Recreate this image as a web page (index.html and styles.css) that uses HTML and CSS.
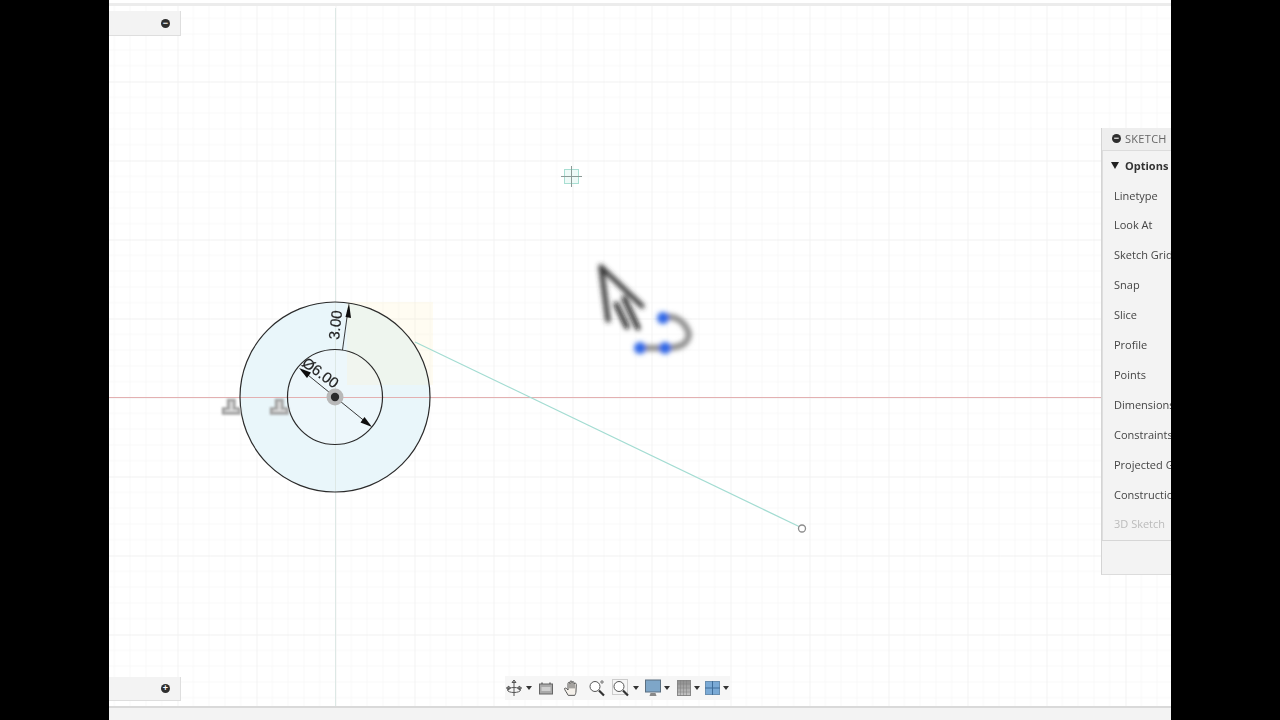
FILE: index.html
```html
<!DOCTYPE html>
<html lang="en">
<head>
    <meta charset="UTF-8">
    <title>Sketch</title>
    <link rel="stylesheet" href="styles.css">
</head>
<body>
<div class="app">
    <div class="top-strip"></div>

    <div class="canvas">
        <!-- sketch drawing, the viewBox keeps screen coordinates (canvas origin is 109,6) -->
        <svg class="drawing" width="1062" height="700" viewBox="109 6 1062 700">
            <defs>
                <pattern id="grid" x="335.5" y="397.5" width="79" height="79" patternUnits="userSpaceOnUse">
                    <path d="M15.8 0V79M31.6 0V79M47.4 0V79M63.2 0V79M0 15.8H79M0 31.6H79M0 47.4H79M0 63.2H79" fill="none" stroke="#f8f8f8" stroke-width="1"/>
                    <path d="M0 0V79M0 0H79" fill="none" stroke="#eeeeee" stroke-width="1.4"/>
                </pattern>
                <filter id="soft"><feGaussianBlur stdDeviation="0.45"/></filter>
                <filter id="blurry" x="-20%" y="-20%" width="140%" height="140%"><feGaussianBlur stdDeviation="0.8"/></filter>
                <filter id="smear" filterUnits="userSpaceOnUse" x="580" y="250" width="130" height="120"><feGaussianBlur stdDeviation="2.6"/></filter>
            </defs>
            <rect x="109" y="6" width="1062" height="700" fill="url(#grid)"/>

            <circle cx="335" cy="397" r="95" fill="#e9f6fa"/>
            <circle cx="335" cy="397" r="47.5" fill="#edf7fb"/>
            <rect x="347" y="302" width="86" height="83" fill="#fff0c4" fill-opacity="0.22"/>

            <line x1="335.5" y1="8" x2="335.5" y2="706" stroke="#dde8e5"/>
            <line x1="109" y1="397.5" x2="1102" y2="397.5" stroke="#e3b0b1"/>
            <line x1="415" y1="342" x2="799" y2="526.5" stroke="#a3dcd2" stroke-width="1.2"/>
            <circle cx="802" cy="528.5" r="3.5" fill="#fff" stroke="#8c8c8c" stroke-width="1.3"/>

            <g filter="url(#soft)">
                <circle cx="335" cy="397" r="95" fill="none" stroke="#2b2b2b" stroke-width="1.2"/>
                <circle cx="335" cy="397" r="47.5" fill="none" stroke="#2b2b2b" stroke-width="1.2"/>

                <line x1="342.5" y1="350" x2="348" y2="310" stroke="#222" stroke-width="0.9"/>
                <path d="M349 303L351 318L345.5 317Z" fill="#111"/>
                <line x1="303" y1="371" x2="367" y2="423" stroke="#222" stroke-width="0.9"/>
                <path d="M299 368L311 372.5L307 378Z" fill="#111"/>
                <path d="M372 427L360.5 422.5L364.5 417Z" fill="#111"/>

                <text class="dim" transform="translate(339 340) rotate(-84)">3.00</text>
                <text class="dim" transform="translate(301 365) rotate(36)">Ø6.00</text>
            </g>

            <circle cx="335" cy="397" r="8.5" fill="#b8b8b8" filter="url(#soft)"/>
            <circle cx="335" cy="397" r="4.2" fill="#2a2a2a"/>

            <g class="constraint" filter="url(#blurry)">
                <path d="M223 413.5H239.5V408.5H234.5V400H228V408.5H223Z"/>
                <path d="M271 413.5H287.5V408.5H282.5V400H276V408.5H271Z"/>
                <path class="constraint-inner" d="M226 410.5H237M231.5 402V410.5M274 410.5H285M279.5 402V410.5"/>
            </g>

            <!-- origin point marker -->
            <g fill="none" stroke-width="1" filter="url(#soft)">
                <rect x="564.5" y="169.5" width="14" height="14" fill="#eefaf7" stroke="#a8ded2"/>
                <path d="M561 176.5H582M571.5 166V187" stroke="#8b9a96"/>
            </g>

            <!-- smeared cursor from the video capture -->
            <g filter="url(#smear)" fill="none" stroke-linecap="round" stroke-linejoin="round">
                <path d="M601 267L608 320M601 267L642 306" stroke="#333" stroke-width="5"/>
                <path d="M616 304L627 327M624 298L638 328" stroke="#111" stroke-width="4.5"/>
                <path d="M664 317C678 315 686 324 689 334C688 342 684 348 664 348H640" stroke="#888" stroke-width="6"/>
                <circle cx="663" cy="318" r="6" fill="#2f66e6"/>
                <circle cx="640" cy="348" r="6" fill="#2f66e6"/>
                <circle cx="665" cy="348" r="6" fill="#2f66e6"/>
            </g>
        </svg>

        <div class="side-tab side-tab-top"><span class="round-btn">&minus;</span></div>
        <div class="side-tab side-tab-bottom"><span class="round-btn">+</span></div>

        <div class="palette">
            <div class="palette-head"><span class="round-btn">&minus;</span>SKETCH PALETTE</div>
            <div class="palette-body">
                <div class="palette-title"><span class="caret"></span>Options</div>
                <div class="palette-row">Linetype</div>
                <div class="palette-row">Look At</div>
                <div class="palette-row">Sketch Grid</div>
                <div class="palette-row">Snap</div>
                <div class="palette-row">Slice</div>
                <div class="palette-row">Profile</div>
                <div class="palette-row">Points</div>
                <div class="palette-row">Dimensions</div>
                <div class="palette-row">Constraints</div>
                <div class="palette-row">Projected Geometries</div>
                <div class="palette-row">Construction</div>
                <div class="palette-row disabled">3D Sketch</div>
            </div>
            <div class="palette-foot"></div>
        </div>

        <div class="toolbar">
            <svg class="tool" width="18" height="18" viewBox="0 0 18 18" fill="none" stroke="#555" stroke-width="1">
                <path d="M9 1V17M9 1L7 3.5H11ZM1.5 9H6M12 9H16.5M1.5 9L4 7V11ZM16.5 9L14 7V11Z"/>
                <ellipse cx="9" cy="11" rx="6.5" ry="2.5"/>
            </svg>
            <span class="caret small"></span>
            <svg class="tool gap" width="16" height="16" viewBox="0 0 16 16">
                <rect x="1.5" y="4" width="13" height="10" fill="#a9a9a9" stroke="#666"/>
                <rect x="3.5" y="7" width="9" height="4" fill="#cfcfcf"/>
                <path d="M4 4V2.5M12 4V2.5" stroke="#666" stroke-width="1.5"/>
            </svg>
            <svg class="tool gap-9" width="18" height="18" viewBox="0 0 18 18" fill="#f4f0ea" stroke="#555" stroke-width="1" stroke-linecap="round" stroke-linejoin="round">
                <path d="M5 16C3.5 13 1.5 11 1.5 9.5C2.5 8.5 4 9.5 5 11V4.5C5 3 6.8 3 7 4.5V3C7 1.5 9 1.5 9 3V3.5C9.3 2 11 2.3 11 3.8V5C11.5 3.7 13.5 4 13.3 5.5L13 12C13 14 12.5 15 12 16Z"/>
                <path d="M7 4.5V9M9 3.5V9M11 5V9" fill="none"/>
            </svg>
            <svg class="tool gap-7" width="18" height="18" viewBox="0 0 18 18" fill="none" stroke="#555">
                <circle cx="7" cy="7.5" r="5" fill="#fff"/>
                <path d="M11 11.5L16 16.5" stroke="#333" stroke-width="2.2"/>
                <path d="M14 1V5M12 3H16" stroke="#777"/>
            </svg>
            <svg class="tool gap" width="18" height="18" viewBox="0 0 18 18" fill="none" stroke="#555">
                <rect x="0.5" y="0.5" width="15" height="15" stroke="#ccc"/>
                <circle cx="7" cy="7.5" r="5" fill="#fff"/>
                <path d="M11 11.5L16 16.5" stroke="#333" stroke-width="2.2"/>
            </svg>
            <span class="caret small"></span>
            <svg class="tool gap" width="16" height="18" viewBox="0 0 16 18">
                <rect x="0.5" y="1" width="15" height="12" fill="#7ea6c8" stroke="#5b6f80"/>
                <path d="M5.5 14H10.5L11.5 17H4.5Z" fill="#888"/>
            </svg>
            <span class="caret small"></span>
            <svg class="tool gap-7" width="14" height="16" viewBox="0 0 14 16">
                <defs>
                    <linearGradient id="gridFade" x1="0" y1="0" x2="0" y2="1">
                        <stop offset="0" stop-color="#8e8e8e"/>
                        <stop offset="1" stop-color="#c4c4c4"/>
                    </linearGradient>
                </defs>
                <rect x="0.5" y="0.5" width="13" height="15" fill="url(#gridFade)" stroke="#888"/>
                <path d="M3.5 0V16M6.5 0V16M9.5 0V16M0 4H14M0 8H14M0 12H14" stroke="#7e7e7e" stroke-width="0.5"/>
            </svg>
            <span class="caret small"></span>
            <svg class="tool gap-5" width="15" height="14" viewBox="0 0 15 14">
                <rect x="0.5" y="0.5" width="14" height="13" fill="#7aaad6" stroke="#6a8fb0"/>
                <path d="M7.5 0V14M0 7H15" stroke="#3f6d99" stroke-width="1"/>
            </svg>
            <span class="caret small"></span>
        </div>
    </div>

    <div class="bottom-strip"></div>
</div>
</body>
</html>
```

FILE: styles.css
```css
html, body {
    margin: 0;
    height: 100%;
    background-color: #000;
}

body {
    display: flex;
    padding-left: 109px;
    box-sizing: border-box;
    font-family: "Open Sans", "Liberation Sans", sans-serif;
    color: #444;
}

.app {
    width: 1062px;
    height: 720px;
    display: flex;
    flex-direction: column;
    overflow: hidden;
    background-color: #fff;
}

.top-strip {
    height: 3px;
    margin-top: 3px;
    background-color: #ececec;
    flex: none;
}

.canvas {
    position: relative;
    flex: 1;
    overflow: hidden;
    background-color: #fff;
}

.bottom-strip {
    height: 12px;
    flex: none;
    border-top: 2px solid #d9d9d9;
    background-color: #f3f3f3;
}

.drawing {
    display: block;
}

.dim {
    font-family: "Liberation Sans", Arial, sans-serif;
    font-size: 15px;
    fill: #222;
    stroke: #222;
    stroke-width: 0.2;
}

.constraint path {
    fill: #c2c2c2;
    stroke: #a3a3a3;
    stroke-width: 2.4;
}

.constraint .constraint-inner {
    fill: none;
    stroke: #ececec;
    stroke-width: 1;
}

/* collapsed tabs on the left edge */
.side-tab {
    position: absolute;
    left: 0;
    width: 72px;
    height: 24px;
    display: flex;
    align-items: center;
    justify-content: flex-end;
    padding-right: 10px;
    box-sizing: border-box;
    background-color: #f3f3f3;
    border-right: 1px solid #dedede;
    border-bottom: 1px solid #dedede;
}

.side-tab-top {
    top: 5px;
    height: 25px;
}

.side-tab-bottom {
    top: 671px;
}

.round-btn {
    width: 9px;
    height: 9px;
    border-radius: 50%;
    background-color: #2e2e2e;
    color: #fff;
    font-family: "Liberation Sans", sans-serif;
    font-size: 9px;
    font-weight: bold;
    line-height: 9px;
    text-align: center;
    flex: none;
}

/* sketch palette, runs off the right edge */
.palette {
    position: absolute;
    left: 992px;
    top: 122px;
    width: 230px;
    height: 447px;
    display: flex;
    flex-direction: column;
    background-color: #f3f3f3;
    border-left: 1px solid #d4d4d4;
    border-bottom: 1px solid #dcdcdc;
    box-sizing: border-box;
    font-size: 11px;
    filter: blur(0.3px);
}

.palette-head {
    height: 20px;
    padding-bottom: 2px;
    flex: none;
    display: flex;
    align-items: center;
    gap: 4px;
    padding-left: 10px;
    background-color: #eeeeee;
    border-bottom: 1px solid #dcdcdc;
    color: #666;
    letter-spacing: 0.3px;
    white-space: nowrap;
}

.palette-body {
    flex: 1;
    padding-left: 8px;
    border-left: 1px solid #dedede;
}

.palette-title {
    height: 29.6px;
    box-sizing: border-box;
    display: flex;
    align-items: center;
    gap: 6px;
    font-size: 11px;
    font-weight: bold;
    color: #333;
    white-space: nowrap;
}

.palette-row {
    height: 29.9px;
    padding-left: 3px;
    line-height: 29.9px;
    white-space: nowrap;
    color: #444;
}

.palette-row.disabled {
    color: #bbb;
}

.palette-foot {
    height: 33px;
    flex: none;
    border-top: 1px solid #d6d6d6;
}

.caret {
    width: 0;
    height: 0;
    border-left: 4.5px solid transparent;
    border-right: 4.5px solid transparent;
    border-top: 7px solid #222;
}

.caret.small {
    margin-left: 3px;
    border-left-width: 3px;
    border-right-width: 3px;
    border-top: 4px solid #333;
}

/* navigation bar at the bottom of the canvas */
.toolbar {
    position: absolute;
    left: 396px;
    top: 670px;
    width: 225px;
    height: 24px;
    display: flex;
    align-items: center;
    box-sizing: border-box;
    background-color: #f6f6f6;
    filter: blur(0.3px);
}

.tool {
    flex: none;
}

.tool.gap {
    margin-left: 6px;
}

.tool.gap-9 {
    margin-left: 9px;
}

.tool.gap-7 {
    margin-left: 7px;
}

.tool.gap-5 {
    margin-left: 5px;
}
```
